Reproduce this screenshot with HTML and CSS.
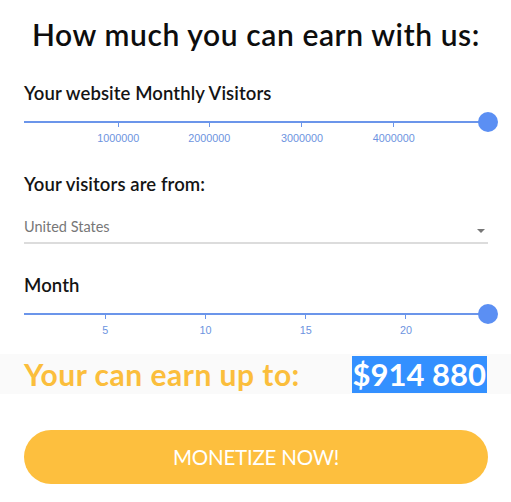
FILE: index.html
```html
<!DOCTYPE html>
<html>
<head>
<meta charset="utf-8">
<link rel="stylesheet" href="styles.css">
</head>
<body>
<div class="calc">
  <h1 class="title">How much you can earn with us:</h1>

  <div class="field field-first">
    <div class="label">Your website Monthly Visitors</div>
    <div class="slider">
      <div class="track"></div>
      <div class="thumb"></div>
      <div class="tick" style="left:20.2%"><span>1000000</span></div>
      <div class="tick" style="left:39.8%"><span>2000000</span></div>
      <div class="tick" style="left:59.8%"><span>3000000</span></div>
      <div class="tick" style="left:79.6%"><span>4000000</span></div>
    </div>
  </div>

  <div class="field field-select">
    <div class="label">Your visitors are from:</div>
    <div class="select">
      <span class="select-value">United States</span>
      <span class="caret"></span>
    </div>
  </div>

  <div class="field">
    <div class="label">Month</div>
    <div class="slider">
      <div class="track"></div>
      <div class="thumb"></div>
      <div class="tick" style="left:17.4%"><span>5</span></div>
      <div class="tick" style="left:39.0%"><span>10</span></div>
      <div class="tick" style="left:60.6%"><span>15</span></div>
      <div class="tick" style="left:82.2%"><span>20</span></div>
    </div>
  </div>
</div>

<div class="result">
  <span class="result-label">Your can earn up to:</span>
  <span class="result-value">$914 880</span>
</div>

<div class="action">
  <button class="btn">MONETIZE NOW!</button>
</div>
</body>
</html>
```

FILE: styles.css
```css
* { box-sizing: border-box; }
html, body { margin: 0; padding: 0; background: #ffffff; }
body {
  font-family: Lato, "Open Sans", sans-serif;
  color: #111;
  width: 511px;
}
.calc { padding: 0 23px 0 24px; }
.title {
  margin: 0;
  padding-top: 16px;
  font-size: 30px;
  line-height: 36px;
  font-weight: 600;
  text-align: center;
  letter-spacing: 0.6px;
  color: #0d0d0d;
}
.label {
  font-size: 18.5px;
  font-weight: 600;
  line-height: 22px;
  letter-spacing: 0.1px;
  color: #141414;
}
.field-first { padding-top: 30px; }
.slider {
  position: relative;
  height: 43px;
  margin-top: 17px;
}
.track {
  height: 2px;
  background: #6b95ea;
}
.thumb {
  position: absolute;
  right: -10px;
  top: -9px;
  width: 20px;
  height: 20px;
  border-radius: 50%;
  background: #5b8ff3;
}
.tick {
  position: absolute;
  top: 1px;
  width: 1px;
  height: 5px;
  background: #6b95ea;
}
.tick span {
  position: absolute;
  top: 10px;
  left: 50%;
  transform: translateX(-50%);
  font-family: "Liberation Sans", Arial, sans-serif;
  font-size: 10.8px;
  line-height: 12px;
  color: #6c93e0;
  white-space: nowrap;
}
.field-select { padding-top: 9px; }
.select {
  display: flex;
  justify-content: space-between;
  align-items: center;
  height: 49px;
  border-bottom: 2px solid #dcdcdc;
  padding-top: 16px;
  padding-right: 3px;
  margin-bottom: 30px;
}
.select-value {
  font-size: 14.5px;
  color: #777;
}
.caret {
  width: 0; height: 0;
  border-left: 4px solid transparent;
  border-right: 4px solid transparent;
  border-top: 4px solid #777;
  margin-top: 8px;
}
.result {
  margin-top: -2px;
  height: 40px;
  background: #fafafa;
  display: flex;
  align-items: center;
  justify-content: space-between;
  padding: 0 24px 0 24px;
}
.result-label {
  font-size: 30px;
  font-weight: 700;
  letter-spacing: 0.5px;
  color: #fbbe3c;
}
.result-value {
  font-size: 31px;
  font-weight: 700;
  line-height: 37px;
  color: #fff;
  background: #3390ff;
  padding: 0 1px;
}
.action { padding: 36px 23px 0 24px; }
.btn {
  display: block;
  width: 100%;
  height: 54px;
  border: 0;
  border-radius: 27px;
  background: #fdbf3e;
  color: #fff;
  font-family: Lato, "Open Sans", sans-serif;
  font-size: 20.5px;
  font-weight: 400;
  letter-spacing: -0.2px;
}
```
